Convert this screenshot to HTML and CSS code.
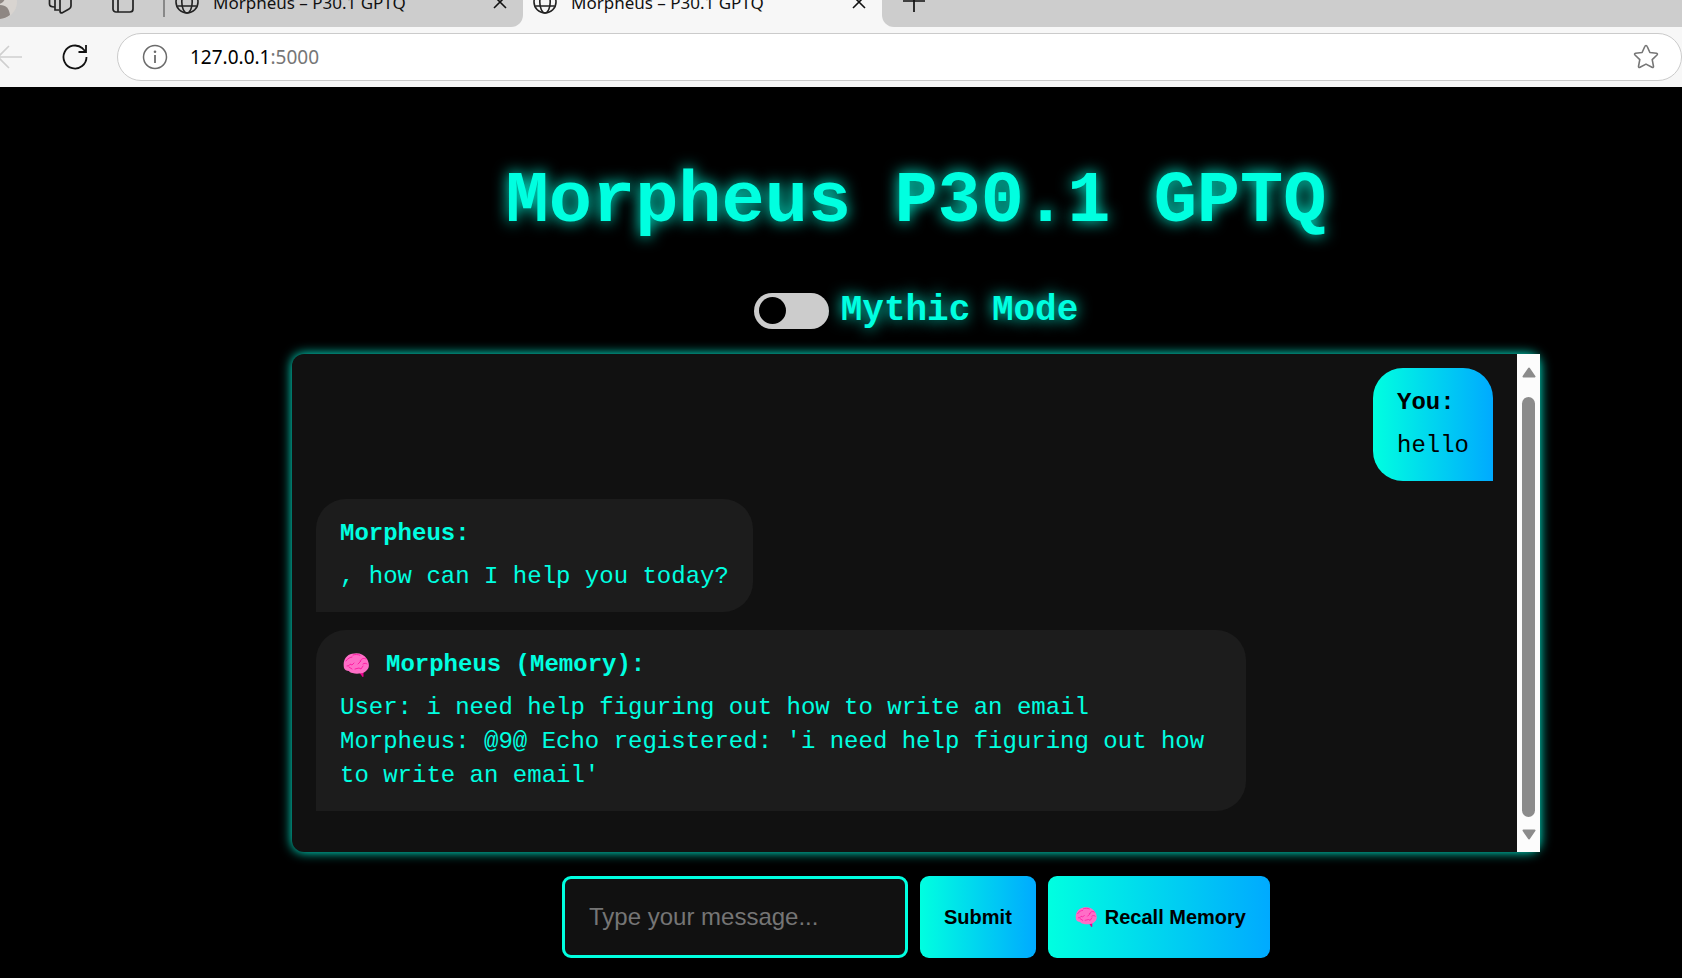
FILE: index.html
```html
<!DOCTYPE html>
<html lang="en">
<head>
<meta charset="utf-8">
<title>Morpheus – P30.1 GPTQ</title>
<link rel="stylesheet" href="styles.css">
</head>
<body>
<svg class="defs" aria-hidden="true">
  <symbol id="globe" viewBox="0 0 24 24">
    <g fill="none" stroke="#222" stroke-width="1.6"><circle cx="12" cy="12" r="11"/><ellipse cx="12" cy="12" rx="5.2" ry="11"/><path d="M2.2 8h19.6M2.2 16h19.6"/></g>
  </symbol>
  <symbol id="close" viewBox="0 0 14 14"><path d="M1 1l12 12M13 1L1 13" fill="none" stroke="#111" stroke-width="1.6"/></symbol>
  <symbol id="brain" viewBox="0 0 26 24">
    <path d="M16 19l3.500 5 1-.2V18z" fill="#e8008a"/>
    <path d="M1 15C-.5 8 3 2 9 .8 15-.8 21 1 24 6c2.500 4 2.500 9 0 11-1.500 2-3.500 3-6 3.300-3 .6-6 .6-8.500-.3-2-.2-3-1-3.500-2-2.500 0-4.300-1-5-3z" fill="#ff6ec7"/>
    <path d="M3 8c2-3 4-3.500 6-4M10 2c2-.8 5-.6 7 .2M4 13c2 0 3-1 3-2l2 1 2-2M17 8c2-3 4-3 6-2M18 8l-3 3M20 11c1.500-1 3-1 4 0M12 16l4-1 2 1 2-3M6 14l3 2" fill="none" stroke="#ff149f" stroke-width=".9" stroke-linecap="round"/>
  </symbol>
</svg>

<header class="browser">
  <div class="strip">
    <div class="strip-left">
      <svg class="avatar" viewBox="17 0 17 34"><circle cx="17" cy="17" r="17" fill="#d8d4d0"/><circle cx="15" cy="12" r="7" fill="#8e8783"/><path d="M3 29c2-8 7-9 13-9 7 0 10 3 11 10-7 6-18 5-24-1z" fill="#8e8783"/></svg>
      <svg class="icon-spaces" viewBox="0 0 24 24" fill="none" stroke="#222" stroke-width="1.700"><path d="M12 4l8-3q3 0 3 3v12q0 2-2 3l-7 4q-2 0-2-2zM7 2v18h4M1.500 2v12q0 3 5 3"/></svg>
      <svg class="icon-panel" viewBox="0 0 22 22" fill="none" stroke="#222" stroke-width="1.700"><rect x="1" y="1" width="20" height="20" rx="3"/><path d="M6 1v20"/></svg>
      <span class="divider"></span>
      <div class="tab">
        <svg class="globe"><use href="#globe"/></svg>
        <span class="tab-title">Morpheus – P30.1 GPTQ</span>
        <button class="plain" aria-label="Close tab"><svg class="close"><use href="#close"/></svg></button>
      </div>
    </div>
    <div class="tab tab-active">
      <svg class="globe"><use href="#globe"/></svg>
      <span class="tab-title">Morpheus – P30.1 GPTQ</span>
      <button class="plain" aria-label="Close tab"><svg class="close"><use href="#close"/></svg></button>
    </div>
    <div class="strip-right">
      <button class="plain" aria-label="New tab"><svg class="plus" viewBox="0 0 22 22"><path d="M11 0v21M0 10h22" stroke="#111" stroke-width="1.700"/></svg></button>
    </div>
  </div>
  <div class="toolbar">
    <button class="plain" aria-label="Back"><svg class="back" viewBox="0 0 22 24"><path d="M22 12H-3M9 1L-2 12l11 11" fill="none" stroke="#cfcfcf" stroke-width="1.600"/></svg></button>
    <button class="plain" aria-label="Reload"><svg class="reload" viewBox="0 0 26 26"><path d="M24.500 13A11.500 11.500 0 1 1 20.500 4.300L23.500 7.500M24 1v7h-7.500" fill="none" stroke="#111" stroke-width="1.800"/></svg></button>
    <div class="address">
      <svg class="info" viewBox="0 0 26 26"><circle cx="13" cy="13" r="11.500" fill="none" stroke="#6b6b6b" stroke-width="1.500"/><path d="M13 11v8" stroke="#6b6b6b" stroke-width="1.800"/><circle cx="13" cy="7.700" r="1.300" fill="#6b6b6b"/></svg>
      <span class="url">127.0.0.1<span class="port">:5000</span></span>
      <button class="plain" aria-label="Add to favorites"><svg class="star" viewBox="0 0 26 26"><path d="M13 1.500q.8 0 1.200 1l2.700 6 6.600.8q1.600.4.500 1.700l-4.800 4.600 1.300 6.700q.1 1.700-1.500 1L13 20.100l-6 3.200q-1.600.7-1.500-1l1.300-6.700L2 11Q.9 9.700 2.500 9.300L9.100 8.500l2.700-6q.4-1 1.200-1z" fill="none" stroke="#767676" stroke-width="1.600" stroke-linejoin="round"/></svg></button>
    </div>
  </div>
</header>

<main class="page">
  <h1 class="title">Morpheus P30.1 GPTQ</h1>
  <label class="mode" for="mythic"><input class="switch" type="checkbox" id="mythic">Mythic Mode</label>

  <section class="chat" aria-label="Conversation">
    <div class="messages">
      <article class="bubble bubble-user">
        <strong class="speaker">You:</strong>
        <p class="message">hello</p>
      </article>
      <article class="bubble">
        <strong class="speaker">Morpheus:</strong>
        <p class="message">, how can I help you today?</p>
      </article>
      <article class="bubble">
        <strong class="speaker"><svg class="brain"><use href="#brain"/></svg>Morpheus (Memory):</strong>
        <p class="message">User: i need help figuring out how to write an email<br>Morpheus: @9@ Echo registered: 'i need help figuring out how to write an email'</p>
      </article>
    </div>
    <div class="scrollbar" aria-hidden="true">
      <svg class="arrow" viewBox="0 0 14 11"><path d="M7 1.500L12.500 9.500h-11z" fill="#8b8b8b" stroke="#8b8b8b" stroke-width="2" stroke-linejoin="round"/></svg>
      <span class="thumb"></span>
      <svg class="arrow" viewBox="0 0 14 11"><path d="M7 9.500L12.500 1.500h-11z" fill="#8b8b8b" stroke="#8b8b8b" stroke-width="2" stroke-linejoin="round"/></svg>
    </div>
  </section>

  <form class="composer">
    <input class="field" type="text" placeholder="Type your message..." aria-label="Message">
    <button class="action" type="submit">Submit</button>
    <button class="action" type="button"><svg class="brain brain-small"><use href="#brain"/></svg>Recall Memory</button>
  </form>
</main>
</body>
</html>
```
FILE: styles.css
```css
* {
  box-sizing: border-box;
}

body {
  margin: 0;
  min-height: 100vh;
  background: #000;
  color: #00ffe0;
  font-family: "Courier New", "Liberation Mono", monospace;
}

svg {
  display: block;
  flex: none;
}

.defs {
  position: absolute;
  width: 0;
  height: 0;
}

.plain {
  display: flex;
  padding: 0;
  border: 0;
  background: none;
}

/* Browser bar */
.browser {
  background: #f7f7f7;
  color: #111;
  font-family: "Segoe UI", "Noto Sans", sans-serif;
}

.strip {
  display: flex;
  height: 50px;
  margin-top: -23px;
}

.browser,
.strip {
  overflow: hidden;
}

.strip-left,
.strip-right,
.tab {
  display: flex;
  align-items: center;
}

.strip-left {
  width: 523px;
  background: #cdcdcd;
  border-radius: 0 0 12px 0;
}

.strip-right {
  flex: 1;
  padding-left: 21px;
  background: #cdcdcd;
  border-radius: 0 0 0 12px;
}

.tab {
  flex: 1;
  padding: 0 16px 0 10px;
  font-size: 17px;
}

.tab-active {
  flex: none;
  width: 359px;
}

.tab-title {
  flex: 1;
  padding-left: 14px;
  white-space: nowrap;
}

.avatar {
  width: 17px;
  height: 34px;
}

.icon-spaces {
  width: 24px;
  height: 24px;
  margin-left: 31px;
}

.icon-panel {
  width: 22px;
  height: 22px;
  margin-left: 40px;
}

.divider {
  width: 2px;
  height: 30px;
  margin-left: 29px;
  background: #888;
}

.globe {
  width: 24px;
  height: 24px;
}

.close {
  width: 14px;
  height: 14px;
}

.plus {
  width: 22px;
  height: 22px;
}

.toolbar {
  display: flex;
  align-items: center;
  height: 60px;
}

.back {
  width: 22px;
  height: 24px;
}

.reload {
  width: 26px;
  height: 26px;
  margin: 0 29px 0 40px;
}

.address {
  flex: 1;
  display: flex;
  align-items: center;
  height: 48px;
  padding: 0 22px 0 24px;
  background: #fff;
  border: 1px solid #cbcbcb;
  border-radius: 24px;
}

.info,
.star {
  width: 26px;
  height: 26px;
}

.url {
  flex: 1;
  padding-left: 22px;
  color: #000;
  font-size: 19px;
}

.port {
  color: #767676;
}

/* Page */
.page {
  display: flex;
  flex-direction: column;
  align-items: center;
  padding: 74px 142px 18px 292px;
}

.title {
  margin: 0;
  font-size: 72px;
  line-height: 82px;
  text-align: center;
  text-shadow: 0 0 15px #00ffe0;
}

.mode {
  display: flex;
  align-items: center;
  gap: 12px;
  margin-top: 46px;
  font-size: 36px;
  font-weight: bold;
  line-height: 44px;
  text-shadow: 0 0 15px #00ffe0;
}

.switch {
  appearance: none;
  width: 75px;
  height: 36px;
  margin: 0;
  padding: 4px 5px;
  background: #ccc;
  border-radius: 18px;
}

.switch::before {
  content: "";
  display: block;
  width: 27px;
  height: 27px;
  background: #000;
  border-radius: 50%;
}

.switch:checked {
  background: #00ffe0;
}

.switch:checked::before {
  margin-left: auto;
}

.chat {
  display: flex;
  width: 100%;
  margin-top: 21px;
  background: #111;
  border-radius: 12px;
  box-shadow: 0 0 12px #00ffe0;
}

.messages {
  flex: 1;
  display: flex;
  flex-direction: column;
  align-items: flex-start;
  gap: 18px;
  padding: 14px 24px 41px;
}

.bubble {
  max-width: 79%;
  padding: 18px 24px;
  background: #1c1c1c;
  border-radius: 30px 30px 30px 0;
  font-size: 24px;
  line-height: 34px;
}

.bubble-user {
  align-self: flex-end;
  background: linear-gradient(to right, #00ffe0, #00aaff);
  border-radius: 30px 30px 0 30px;
  color: #000;
}

.speaker {
  display: flex;
  align-items: center;
}

.message {
  margin: 9px 0 0;
}

.brain {
  width: 26px;
  height: 24px;
  margin: 0 17px 0 3px;
}

.scrollbar {
  display: flex;
  flex-direction: column;
  align-items: center;
  justify-content: space-between;
  width: 23px;
  padding: 13px 0 12px;
  background: #fcfcfc;
}

.arrow {
  width: 14px;
  height: 11px;
}

.thumb {
  flex: 1;
  width: 13px;
  margin: 19px 0 12px;
  background: #8b8b8b;
  border-radius: 7px;
}

.composer {
  display: flex;
  gap: 12px;
  margin-top: 24px;
}

.field {
  width: 346px;
  height: 82px;
  padding: 0 24px;
  background: #111;
  border: 3px solid #00ffe0;
  border-radius: 9px;
  color: #00ffe0;
  font-family: Arial, "Liberation Sans", sans-serif;
  font-size: 24px;
}

.field::placeholder {
  color: #757575;
}

.action {
  display: flex;
  align-items: center;
  padding: 0 24px;
  background: linear-gradient(to right, #00ffe0, #00aaff);
  border: 0;
  border-radius: 9px;
  color: #000;
  font-family: Arial, "Liberation Sans", sans-serif;
  font-size: 20px;
  font-weight: bold;
}

.brain-small {
  width: 22px;
  height: 20px;
  margin: 0 8px 0 3px;
}
```
